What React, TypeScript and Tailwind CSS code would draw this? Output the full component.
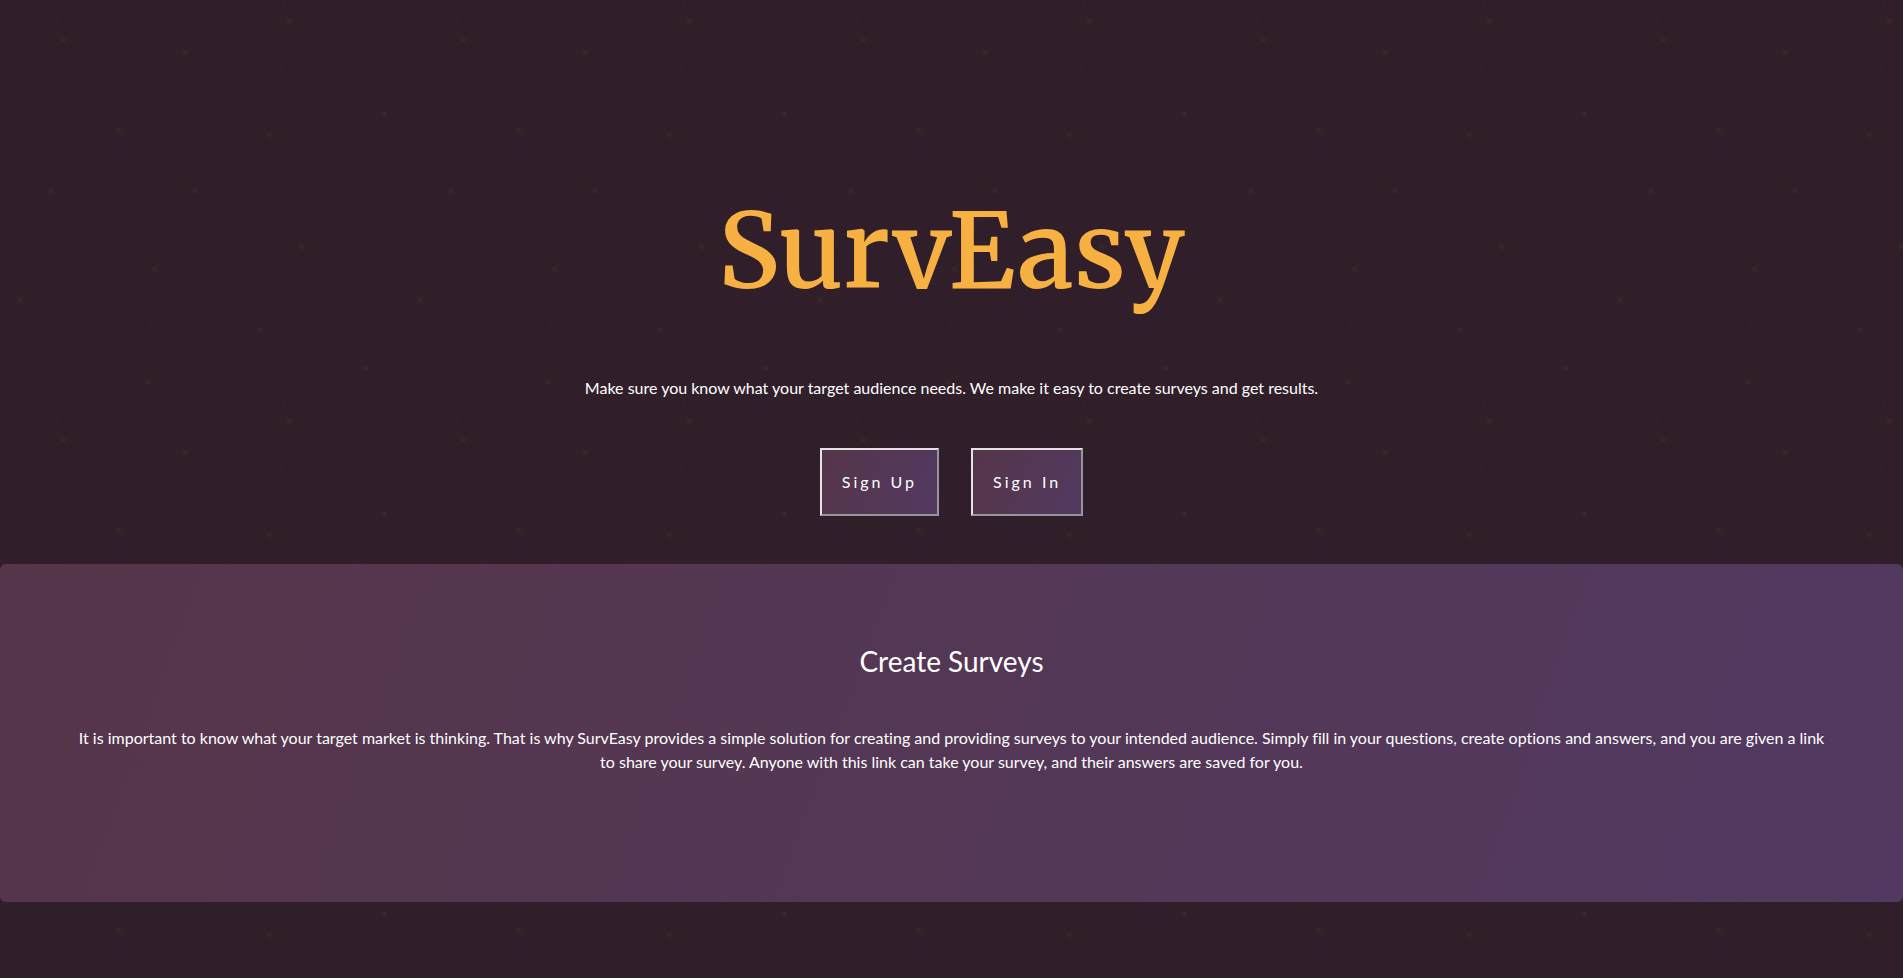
const links = [
  'M769 229L1037 260.9M927 880L731 737 520 660 309 538 40 599 295 764 126.5 879.5 40 599-197 493 102 382-31 229 126.5 79.5-69-63',
  'M-31 229L237 261 390 382 603 493 308.5 537.5 101.5 381.5M370 905L295 764',
  'M520 660L578 842 731 737 840 599 603 493 520 660 295 764 309 538 390 382 539 269 769 229 577.5 41.5 370 105 295-36 126.5 79.5 237 261 102 382 40 599-69 737 127 880',
  'M520-140L578.5 42.5 731-63M603 493L539 269 237 261 370 105M902 382L539 269M390 382L102 382',
  'M-222 42L126.5 79.5 370 105 539 269 577.5 41.5 927 80 769 229 902 382 603 493 731 737M295-36L577.5 41.5M578 842L295 764M40-201L127 80M102 382L-261 269',
];

const stars = [
  [769, 229], [539, 269], [603, 493], [731, 737], [520, 660], [309, 538], [295, 764],
  [40, 599], [102, 382], [127, 80], [370, 105], [578, 42], [237, 261], [390, 382],
];

function Constellation() {
  return (
    <svg className="absolute inset-0 -z-10 h-full w-full" aria-hidden="true">
      <defs>
        <pattern id="constellation" width="400" height="400" patternUnits="userSpaceOnUse" viewBox="0 0 800 800">
          <g fill="none" stroke="#33231c" strokeWidth="1.8">
            {links.map((d) => (
              <path key={d} d={d} />
            ))}
          </g>
          <g fill="#39232f">
            {stars.map(([x, y]) => (
              <circle key={`${x}-${y}`} cx={x} cy={y} r="5" />
            ))}
          </g>
        </pattern>
      </defs>
      <rect width="100%" height="100%" fill="url(#constellation)" />
    </svg>
  );
}

function HeroButton({ label }: { label: string }) {
  return (
    <button
      type="button"
      className="cursor-pointer border-2 border-t-[#e3e3e3] border-r-[#979797] border-b-[#979797] border-l-[#e3e3e3] bg-[linear-gradient(110deg,#553549,#523961)] p-5 text-base leading-6 tracking-[3px]"
    >
      {label}
    </button>
  );
}

export default function App() {
  return (
    <div className="relative isolate min-h-screen bg-[#301f2a] font-[Lato,sans-serif] text-base leading-6 text-white [font-variant-ligatures:none]">
      <Constellation />
      <header className="flex flex-col items-center px-4 pt-44 pb-12 text-center">
        <h1 className="font-['Merriweather','DejaVu_Serif_Condensed','DejaVu_Serif',serif] text-[103px] leading-[152px] font-[650] text-[#f7b042]">
          SurvEasy
        </h1>
        <p className="mt-12">
          Make sure you know what your target audience needs. We make it easy to create surveys and get results.
        </p>
        <div className="mt-12 flex gap-8">
          <HeroButton label="Sign Up" />
          <HeroButton label="Sign In" />
        </div>
      </header>
      <section className="rounded-md bg-[linear-gradient(110deg,#553549,#523961)] px-18 pt-20 pb-32 text-center">
        <h2 className="text-[28px] leading-[34px]">Create Surveys</h2>
        <p className="mt-12">
          It is important to know what your target market is thinking. That is why SurvEasy provides a simple solution
          for creating and providing surveys to your intended audience. Simply fill in your questions, create options
          and answers, and you are given a link to share your survey. Anyone with this link can take your survey, and
          their answers are saved for you.
        </p>
      </section>
    </div>
  );
}
